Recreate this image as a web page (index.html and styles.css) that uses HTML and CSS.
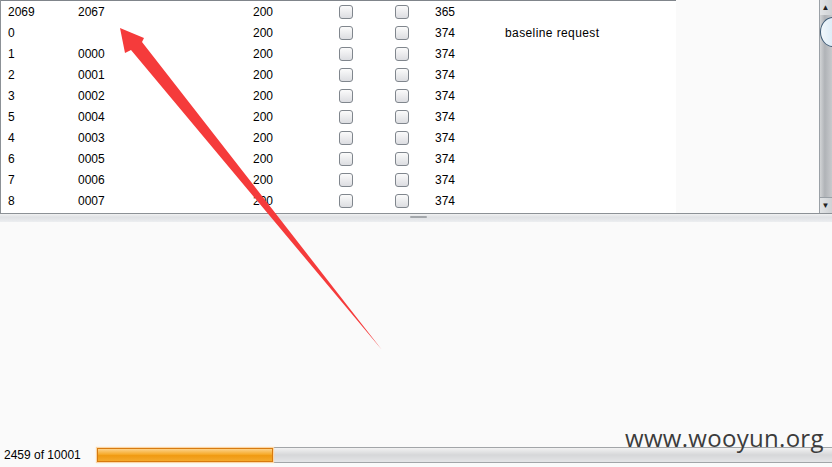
FILE: index.html
```html
<!DOCTYPE html>
<html>
<head>
<meta charset="utf-8">
<link rel="stylesheet" href="styles.css">
</head>
<body>
<div class="app">
  <div class="pane">
    <div class="table">
      <div class="row"><span>2069</span><span>2067</span><span>200</span><span class="cb"></span><span class="cb"></span><span>365</span><span></span></div>
      <div class="row"><span>0</span><span></span><span>200</span><span class="cb"></span><span class="cb"></span><span>374</span><span class="comment">baseline request</span></div>
      <div class="row"><span>1</span><span>0000</span><span>200</span><span class="cb"></span><span class="cb"></span><span>374</span><span></span></div>
      <div class="row"><span>2</span><span>0001</span><span>200</span><span class="cb"></span><span class="cb"></span><span>374</span><span></span></div>
      <div class="row"><span>3</span><span>0002</span><span>200</span><span class="cb"></span><span class="cb"></span><span>374</span><span></span></div>
      <div class="row"><span>5</span><span>0004</span><span>200</span><span class="cb"></span><span class="cb"></span><span>374</span><span></span></div>
      <div class="row"><span>4</span><span>0003</span><span>200</span><span class="cb"></span><span class="cb"></span><span>374</span><span></span></div>
      <div class="row"><span>6</span><span>0005</span><span>200</span><span class="cb"></span><span class="cb"></span><span>374</span><span></span></div>
      <div class="row"><span>7</span><span>0006</span><span>200</span><span class="cb"></span><span class="cb"></span><span>374</span><span></span></div>
      <div class="row"><span>8</span><span>0007</span><span>200</span><span class="cb"></span><span class="cb"></span><span>374</span><span></span></div>
    </div>
    <div class="fill"></div>
    <div class="vscroll">
      <div class="sbtn up">&#9650;</div>
      <div class="track"><div class="thumb"></div></div>
      <div class="sbtn down">&#9660;</div>
    </div>
  </div>
  <div class="splitter"><div class="grip"></div></div>
  <div class="main"></div>
  <div class="status">
    <span class="count">2459 of 10001</span>
    <div class="progress"><div class="bar" style="width:174px"></div></div>
  </div>
  <div class="watermark">www.wooyun.org</div>
  <svg class="arrow" width="400" height="360" viewBox="0 0 400 360">
    <polygon points="120,28 144,38 142,42 382,350 131,50 125,53" fill="#f53b3b"/>
  </svg>
</div>
</body>
</html>
```
FILE: styles.css
```css
html, body {
  margin: 0;
  padding: 0;
}
body {
  background: #fafafa;
  font-family: "Liberation Sans", Arial, sans-serif;
  font-size: 12px;
  color: #000;
}
.app {
  position: relative;
  width: 832px;
  height: 467px;
  display: flex;
  flex-direction: column;
  overflow: hidden;
}
.pane {
  height: 213px;
  display: flex;
  border-left: 1px solid #8c9196;
  border-bottom: 1px solid #8c9196;
  flex: none;
}
.table {
  width: 675px;
  background: #fff;
  border-top: 1px solid #80858b;
  flex: none;
}
.row {
  height: 21px;
  display: grid;
  grid-template-columns: 70px 175px 86px 56px 40px 70px 1fr;
  align-items: center;
  padding-left: 7px;
  white-space: nowrap;
}
.comment {
  letter-spacing: 0.4px;
}
.cb {
  width: 12px;
  height: 12px;
  border: 1px solid #80868d;
  border-radius: 3px;
  background: linear-gradient(#fbfbfb, #dcdde1);
  margin-top: 1px;
}
.fill {
  flex: 1;
  background: #fafafa;
}
.vscroll {
  width: 12px;
  flex: none;
  display: flex;
  flex-direction: column;
  background: #b8bcc0;
  border-left: 1px solid #9aa0a6;
}
.sbtn {
  height: 15px;
  flex: none;
  font-size: 8px;
  line-height: 15px;
  text-align: center;
  color: #222;
  background: linear-gradient(90deg, #e2e4e6, #cfd2d5);
  text-indent: -1px;
}
.down {
  border-top: 1px solid #9aa0a6;
}
.track {
  flex: 1;
  position: relative;
  background: linear-gradient(90deg, #d2d4d6, #b0b3b7 40%, #c8cacd);
}
.thumb {
  position: absolute;
  left: 0;
  top: 2px;
  width: 24px;
  height: 28px;
  border: 1px solid #3d5a74;
  border-radius: 50%;
  background: linear-gradient(90deg, #f2f8fc, #c6def1);
}
.splitter {
  height: 8px;
  flex: none;
  background: linear-gradient(#f0f1f2, #dfe1e4 40%, #eceef0);
  position: relative;
  display: flex;
  justify-content: center;
}
.grip {
  width: 17px;
  height: 2px;
  margin-top: 2px;
  margin-left: 4px;
  background: #a3a7ab;
  border-radius: 1px;
}
.main {
  flex: 1;
  background: #fafafa;
}
.status {
  height: 22px;
  flex: none;
  display: flex;
  align-items: flex-start;
  padding-left: 4px;
}
.count {
  width: 92px;
  line-height: 16px;
  margin-top: 2px;
  white-space: nowrap;
}
.progress {
  flex: 1;
  height: 14px;
  margin-top: 2px;
  border: 1px solid #a2a5a8;
  border-right: none;
  background: linear-gradient(#f2f2f2, #d6d7d9 50%, #e4e5e7);
}
.bar {
  height: 12px;
  border: 1px solid #d77a10;
  background: linear-gradient(#fcd28a, #f6aa2a 45%, #f09a12 55%, #f4a92c);
  box-shadow: 0 0 1px 1px #fbd7a6;
}
.watermark {
  position: absolute;
  left: 625px;
  top: 421px;
  font-family: "Open Sans", "DejaVu Sans", sans-serif;
  font-size: 24px;
  color: #3c3c3c;
  letter-spacing: 0.3px;
}
.arrow {
  position: absolute;
  left: 0;
  top: 0;
}
```
